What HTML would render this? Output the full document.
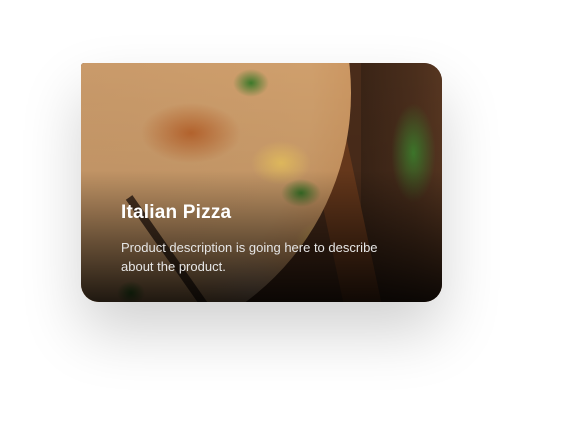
<!DOCTYPE html>
<html><head><style>
body{margin:0;width:561px;height:440px;background:#fff;overflow:hidden;font-family:"Liberation Sans",sans-serif}
.card{position:absolute;left:81px;top:63px;width:361px;height:239px;border-radius:3px 18px 18px 18px;overflow:hidden;
box-shadow:0 30px 60px rgba(0,0,0,.18);background:#4a2c1a}
.pizza{position:absolute;left:-250px;top:-230px;width:520px;height:520px;border-radius:50%;
background:
radial-gradient(ellipse 18px 14px at 420px 250px,#3d7a2a,transparent),
radial-gradient(ellipse 20px 14px at 470px 360px,#3d7a2a,transparent),
radial-gradient(ellipse 14px 12px at 300px 460px,#3d7a2a,transparent),
radial-gradient(ellipse 30px 22px at 450px 330px,#e8c060,transparent),
radial-gradient(ellipse 26px 22px at 490px 410px,#e8c060,transparent),
radial-gradient(ellipse 50px 30px at 360px 300px,#b8652e,transparent),
radial-gradient(ellipse 60px 40px at 420px 460px,#c9a585,transparent),
radial-gradient(circle at 260px 260px,#c99a6a 0,#cf9f6c 60%,#c78c55 85%,#e0c49a 94%,#c89c6a 100%);}
.slice{position:absolute;left:90px;top:120px;width:8px;height:160px;background:#2a1a12;transform:rotate(-35deg);opacity:.8}
.wood{position:absolute;left:238px;top:-10px;width:38px;height:270px;background:#6a3a1c;transform:skewX(12deg);}
.dark{position:absolute;left:280px;top:0;width:90px;height:239px;background:linear-gradient(90deg,#3a2416,#4a2e1c 60%,#5a3822);}
.herb{position:absolute;left:310px;top:40px;width:45px;height:100px;border-radius:50%;background:radial-gradient(#3f7a2c,transparent 70%)}
.shade{position:absolute;inset:0;background:linear-gradient(180deg,rgba(0,0,0,0) 0,rgba(0,0,0,.05) 45%,rgba(0,0,0,.5) 75%,rgba(0,0,0,.85) 100%)}
h1{position:absolute;left:40px;top:139px;margin:0;color:#fff;font-size:19px;font-weight:bold;letter-spacing:.2px}
p{position:absolute;left:40px;top:175px;margin:0;color:#e6e6e6;font-size:13px;line-height:19px;width:290px}
</style></head><body>
<div class="card">
<div class="dark"></div><div class="wood"></div><div class="herb"></div>
<div class="pizza"></div>
<div class="slice"></div>
<div class="shade"></div>
<h1>Italian Pizza</h1>
<p>Product description is going here to describe about the product.</p>
</div>
</body></html>
